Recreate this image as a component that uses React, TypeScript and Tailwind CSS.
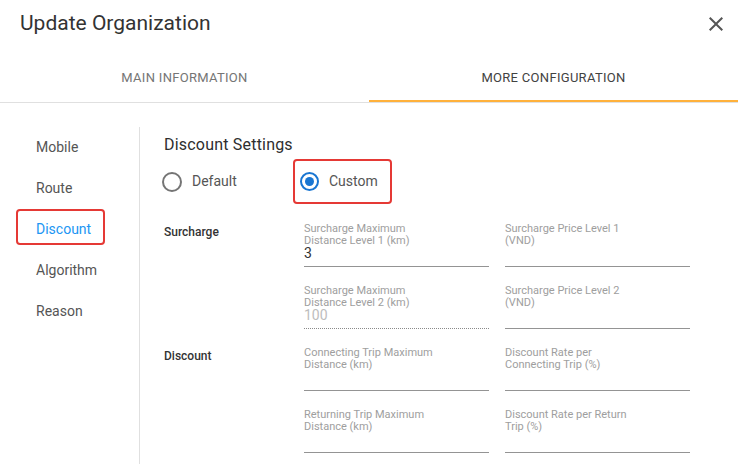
import React from "react";

type Field = {
  label: React.ReactNode;
  value?: string;
  disabled?: boolean;
};

const sections: { title: string; rows: Field[][] }[] = [
  {
    title: "Surcharge",
    rows: [
      [
        { label: <>Surcharge Maximum<br />Distance Level 1 (km)</>, value: "3" },
        { label: <>Surcharge Price Level 1<br />(VND)</> },
      ],
      [
        { label: <>Surcharge Maximum<br />Distance Level 2 (km)</>, value: "100", disabled: true },
        { label: <>Surcharge Price Level 2<br />(VND)</> },
      ],
    ],
  },
  {
    title: "Discount",
    rows: [
      [
        { label: <>Connecting Trip Maximum<br />Distance (km)</> },
        { label: <>Discount Rate per<br />Connecting Trip (%)</> },
      ],
      [
        { label: <>Returning Trip Maximum<br />Distance (km)</> },
        { label: <>Discount Rate per Return<br />Trip (%)</> },
      ],
    ],
  },
];

const navItems = ["Mobile", "Route", "Discount", "Algorithm", "Reason"];

function TextField({ label, value, disabled }: Field) {
  return (
    <div
      className={`w-[185px] h-[45px] pt-[1px] pb-[7px] border-b ${
        disabled ? "border-dotted border-[#8a8a8a]" : "border-[#949494]"
      }`}
    >
      <div className="text-[11px] leading-[12px] text-[#9e9e9e]">{label}</div>
      <div
        className={`text-[14px] leading-[12px] ${disabled ? "text-[#bdbdbd]" : "text-[#333]"}`}
      >
        {value ?? ""}
      </div>
    </div>
  );
}

export default function App() {
  return (
    <div
      className="w-[738px] h-[464px] bg-white overflow-hidden flex flex-col"
      style={{ fontFamily: "Roboto, 'Noto Sans', sans-serif" }}
    >
      {/* header */}
      <div className="h-[54px] flex items-start justify-between pl-5 pr-[10px] shrink-0">
        <h1 className="pt-[9px] text-[21px] leading-[28px] text-[#333]">
          Update Organization
        </h1>
        <button className="mt-[12px] text-[#555]">
          <svg width="24" height="24" viewBox="0 0 24 24" fill="currentColor">
            <path d="M19 6.41L17.59 5 12 10.59 6.41 5 5 6.41 10.59 12 5 17.59 6.41 19 12 13.41 17.59 19 19 17.59 13.41 12z" />
          </svg>
        </button>
      </div>

      {/* tabs */}
      <div className="flex border-b border-[#e0e0e0] shrink-0">
        <div className="flex-1 h-[48px] flex items-center justify-center text-[13px] tracking-[0.3px] text-[#757575]">
          MAIN INFORMATION
        </div>
        <div className="flex-1 h-[48px] flex items-center justify-center pt-[2px] border-b-2 border-[#ffb13b] text-[13px] tracking-[0.3px] text-[#424242]">
          MORE CONFIGURATION
        </div>
      </div>

      {/* body */}
      <div className="flex flex-1 min-h-0">
        <div className="w-[140px] shrink-0 mt-6 border-r border-[#e0e0e0] pl-4 flex flex-col gap-[5px]">
          {navItems.map((item) => (
            <div
              key={item}
              className={`w-[89px] h-[36px] border-2 rounded-[4px] pl-[18px] pt-[8px] text-[14px] leading-[20px] ${
                item === "Discount"
                  ? "border-[#e53935] text-[#2196f3]"
                  : "border-transparent text-[#555]"
              }`}
            >
              {item}
            </div>
          ))}
        </div>

        <div className="flex-1 pl-6 pt-[30px]">
          <div className="text-[16px] leading-[24px] tracking-[0.2px] text-[#2e2e2e]">
            Discount Settings
          </div>
          <div className="flex items-center h-[45px] mt-[2px] -ml-[2px] text-[14px] text-[#555]">
            <div className="w-[131px] flex items-center">
              <span className="w-5 h-5 rounded-full border-2 border-[#757575]" />
              <span className="ml-[10px]">Default</span>
            </div>
            <div className="h-[45px] flex items-center border-2 border-[#e53935] rounded-[4px] pl-[5px] pr-[12px]">
              <span className="w-[19px] h-[19px] rounded-full border-2 border-[#1976d2] flex items-center justify-center">
                <span className="w-[9px] h-[9px] rounded-full bg-[#1976d2]" />
              </span>
              <span className="ml-[10px]">Custom</span>
            </div>
          </div>

          <div className="mt-[18px] flex flex-col gap-[17px]">
            {sections.map((section) => (
              <div key={section.title} className="flex">
                <div className="w-[140px] shrink-0 pt-[2px] text-[12px] leading-[16px] font-medium text-[#333]">
                  {section.title}
                </div>
                <div className="flex flex-col gap-[17px]">
                  {section.rows.map((row, i) => (
                    <div key={i} className="flex gap-4">
                      {row.map((f, j) => (
                        <TextField key={j} {...f} />
                      ))}
                    </div>
                  ))}
                </div>
              </div>
            ))}
          </div>
        </div>
      </div>
    </div>
  );
}
